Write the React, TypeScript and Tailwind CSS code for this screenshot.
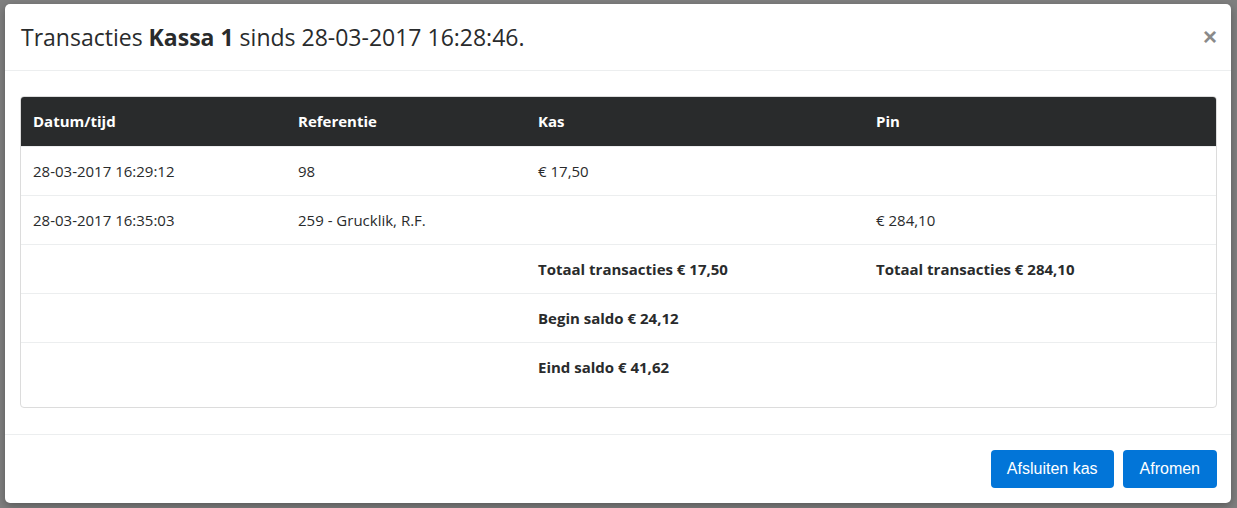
const font = { fontFamily: '"Open Sans", "Noto Sans", sans-serif' };

const rows = [
  { datum: "28-03-2017 16:29:12", ref: "98", kas: "€ 17,50", pin: "" },
  { datum: "28-03-2017 16:35:03", ref: "259 - Grucklik, R.F.", kas: "", pin: "€ 284,10" },
];

const totals = [
  { kas: "Totaal transacties € 17,50", pin: "Totaal transacties € 284,10" },
  { kas: "Begin saldo € 24,12", pin: "" },
  { kas: "Eind saldo € 41,62", pin: "" },
];

const cols = ["w-[265px]", "w-[240px]", "w-[338px]", "flex-1"];

function Row({ cells, bold }: { cells: string[]; bold?: boolean }) {
  return (
    <div className="flex h-[49px] items-center border-t border-[#eceeef] text-[15px] text-[#292b2c]">
      {cells.map((c, i) => (
        <div key={i} className={`${cols[i]} pl-[12px] ${bold ? "font-bold" : ""}`}>
          {c}
        </div>
      ))}
    </div>
  );
}

export default function App() {
  return (
    <div className="w-[1237px] h-[508px] bg-[#7f7f7f] pt-[4px] pl-[5px] overflow-hidden" style={font}>
      <div className="w-[1226px] h-[499px] bg-white rounded-[5px] flex flex-col shadow-[0_3px_9px_rgba(0,0,0,0.3)]">
        <div className="h-[67px] flex items-center justify-between pl-[16px] pr-[14px] border-b border-[#eceeef]">
          <h4 className="text-[23px] text-[#292b2c]">
            Transacties <span className="font-bold">Kassa 1</span> sinds 28-03-2017 16:28:46.
          </h4>
          <span className="text-[24px] font-bold text-[#8a8a8a] leading-none" style={{ fontFamily: '"Liberation Sans", sans-serif' }}>
            ×
          </span>
        </div>
        <div className="pt-[25px] pl-[15px] pr-[14px] h-[363px]">
          <div className="border border-[#dcdcdc] rounded-[4px] pb-[16px] overflow-hidden">
            <div className="flex h-[49px] items-center bg-[#292b2c] text-white text-[15px] font-bold">
              {["Datum/tijd", "Referentie", "Kas", "Pin"].map((h, i) => (
                <div key={h} className={`${cols[i]} pl-[12px]`}>
                  {h}
                </div>
              ))}
            </div>
            {rows.map((r) => (
              <Row key={r.datum} cells={[r.datum, r.ref, r.kas, r.pin]} />
            ))}
            {totals.map((t) => (
              <Row key={t.kas} cells={["", "", t.kas, t.pin]} bold />
            ))}
          </div>
        </div>
        <div className="flex-1 border-t border-[#eceeef] flex items-center justify-end gap-[9px] pr-[14px]">
          <button className="h-[38px] px-[16px] rounded-[4px] bg-[#0275d8] text-white text-[16px]" style={{ fontFamily: '"Liberation Sans", Arial, sans-serif' }}>
            Afsluiten kas
          </button>
          <button className="h-[38px] px-[17px] rounded-[4px] bg-[#0275d8] text-white text-[16px]" style={{ fontFamily: '"Liberation Sans", Arial, sans-serif' }}>
            Afromen
          </button>
        </div>
      </div>
    </div>
  );
}
